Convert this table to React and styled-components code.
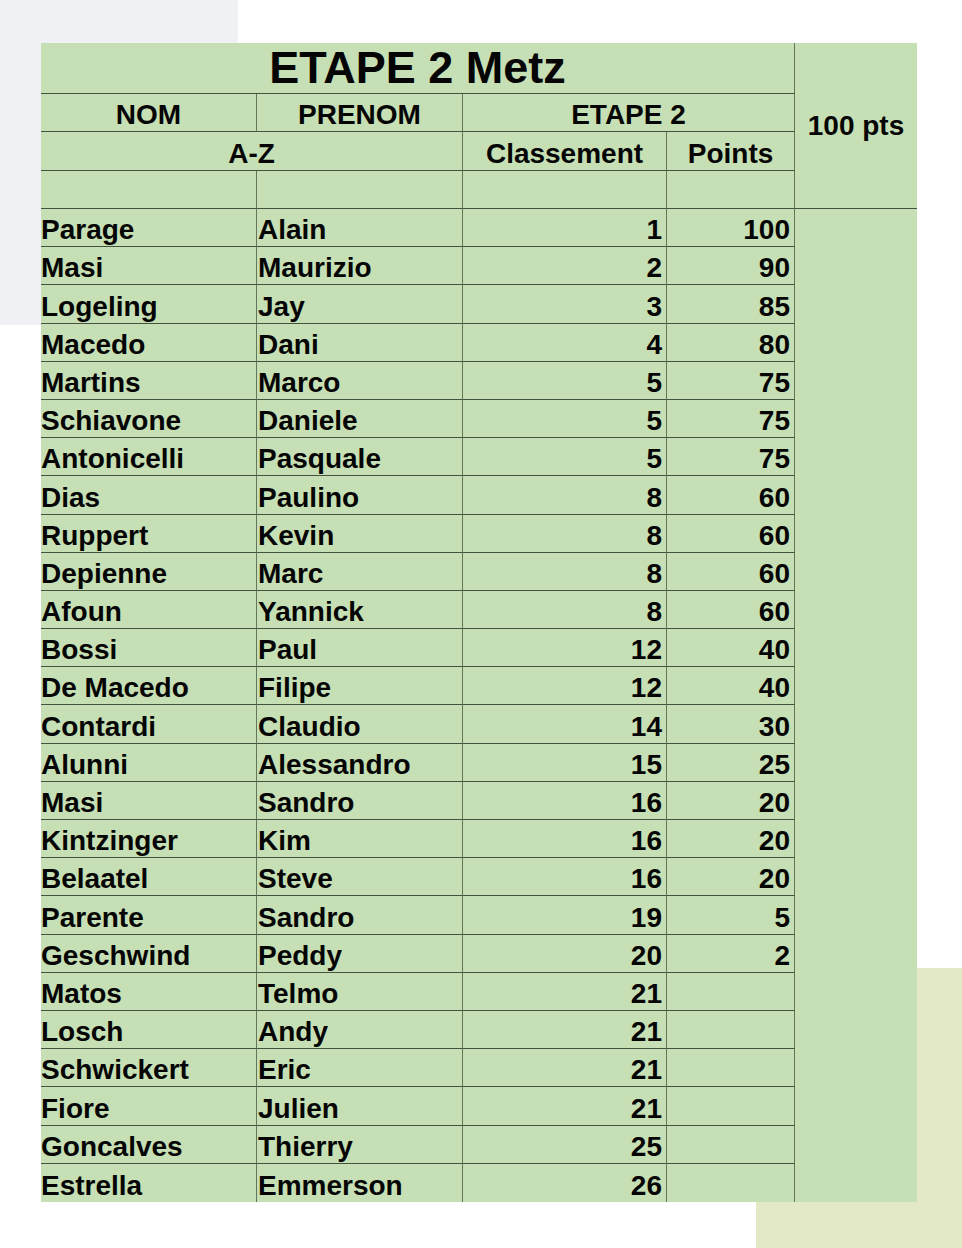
import React from "react"
import styled, { createGlobalStyle } from "styled-components"

const GREEN = "#c6dfb4"
const H_LINE = "#45523f"
const V_LINE = "#62765a"

const GlobalStyle = createGlobalStyle`
  html, body {
    margin: 0;
    padding: 0;
    background: #ffffff;
  }
  body {
    font-family: "Liberation Sans", Arial, sans-serif;
  }
`

const Page = styled.div`
  position: relative;
  width: 962px;
  height: 1248px;
  overflow: hidden;
  padding: 43px 0 0 41px;
  box-sizing: border-box;
`

const Backdrop = styled.div`
  position: absolute;
  z-index: 0;
  background: ${({ $color }) => $color};
  left: ${({ $x }) => $x}px;
  top: ${({ $y }) => $y}px;
  width: ${({ $w }) => $w}px;
  height: ${({ $h }) => $h}px;
`

const Sheet = styled.div`
  position: relative;
  z-index: 1;
  display: grid;
  grid-template-columns: 216px 206px 204px 128px 122px;
  grid-template-rows: 51px 38px 39px 38px repeat(26, 38.19px);
  width: 876px;
  background: ${GREEN};
  color: #050505;
  font-weight: 700;
  font-size: 28px;
  line-height: 32px;
`

const Cell = styled.div`
  box-sizing: border-box;
  display: flex;
  align-items: ${({ $middle }) => ($middle ? "center" : "flex-end")};
  justify-content: ${({ $align }) =>
    $align === "center" ? "center" : $align === "right" ? "flex-end" : "flex-start"};
  padding-left: ${({ $pl }) => $pl || 0}px;
  padding-right: ${({ $align }) => ($align === "right" ? "4px" : "0")};
  border-right: ${({ $right }) => ($right ? `1px solid ${V_LINE}` : "none")};
  border-bottom: ${({ $bottom }) => ($bottom ? `1px solid ${H_LINE}` : "none")};
  grid-column: ${({ $col }) => $col || "auto"};
  grid-row: ${({ $row }) => $row || "auto"};
  white-space: nowrap;
`

const Title = styled(Cell)`
  font-size: 45px;
  line-height: 51px;
`

const rows = [
  ["Parage", "Alain", 1, 100],
  ["Masi", "Maurizio", 2, 90],
  ["Logeling", "Jay", 3, 85],
  ["Macedo", "Dani", 4, 80],
  ["Martins", "Marco", 5, 75],
  ["Schiavone", "Daniele", 5, 75],
  ["Antonicelli", "Pasquale", 5, 75],
  ["Dias", "Paulino", 8, 60],
  ["Ruppert", "Kevin", 8, 60],
  ["Depienne", "Marc", 8, 60],
  ["Afoun", "Yannick", 8, 60],
  ["Bossi", "Paul", 12, 40],
  ["De Macedo", "Filipe", 12, 40],
  ["Contardi", "Claudio", 14, 30],
  ["Alunni", "Alessandro", 15, 25],
  ["Masi", "Sandro", 16, 20],
  ["Kintzinger", "Kim", 16, 20],
  ["Belaatel", "Steve", 16, 20],
  ["Parente", "Sandro", 19, 5],
  ["Geschwind", "Peddy", 20, 2],
  ["Matos", "Telmo", 21, ""],
  ["Losch", "Andy", 21, ""],
  ["Schwickert", "Eric", 21, ""],
  ["Fiore", "Julien", 21, ""],
  ["Goncalves", "Thierry", 25, ""],
  ["Estrella", "Emmerson", 26, ""],
]

const App = () => {
  const last = rows.length - 1
  return (
    <Page>
      <GlobalStyle />
      <Backdrop $color="#eff1f5" $x={0} $y={0} $w={238} $h={325} />
      <Backdrop $color="#e2e9c4" $x={756} $y={968} $w={206} $h={280} />
      <Sheet>
        <Title $col="1 / 5" $row="1" $align="center" $right $bottom>
          ETAPE 2 Metz
        </Title>
        <Cell $col="5" $row="1 / 5" $align="center" $middle $bottom>
          100 pts
        </Cell>

        <Cell $col="1" $row="2" $align="center" $right $bottom>NOM</Cell>
        <Cell $col="2" $row="2" $align="center" $right $bottom>PRENOM</Cell>
        <Cell $col="3 / 5" $row="2" $align="center" $right $bottom>ETAPE 2</Cell>

        <Cell $col="1 / 3" $row="3" $align="center" $right $bottom>A-Z</Cell>
        <Cell $col="3" $row="3" $align="center" $right $bottom>Classement</Cell>
        <Cell $col="4" $row="3" $align="center" $right $bottom>Points</Cell>

        <Cell $col="1" $row="4" $right $bottom />
        <Cell $col="2" $row="4" $right $bottom />
        <Cell $col="3" $row="4" $right $bottom />
        <Cell $col="4" $row="4" $right $bottom />

        {rows.map(([nom, prenom, rank, pts], i) => (
          <React.Fragment key={nom + prenom}>
            <Cell $col="1" $row={i + 5} $align="left" $right $bottom={i !== last}>{nom}</Cell>
            <Cell $col="2" $row={i + 5} $align="left" $pl={1} $right $bottom={i !== last}>{prenom}</Cell>
            <Cell $col="3" $row={i + 5} $align="right" $right $bottom={i !== last}>{rank}</Cell>
            <Cell $col="4" $row={i + 5} $align="right" $right $bottom={i !== last}>{pts}</Cell>
          </React.Fragment>
        ))}
      </Sheet>
    </Page>
  )
}

export default App
